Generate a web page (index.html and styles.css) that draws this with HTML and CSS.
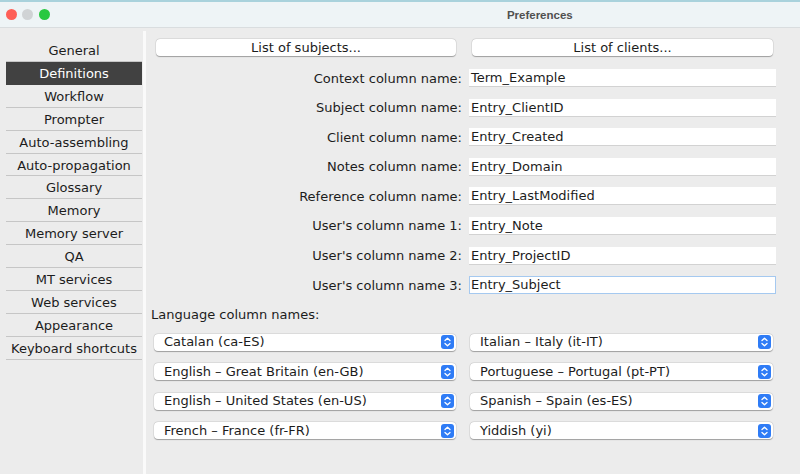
FILE: index.html
```html
<!DOCTYPE html>
<html>
<head>
<meta charset="utf-8">
<link rel="stylesheet" href="styles.css">
</head>
<body>
<div class="window">
  <div class="titlebar">
    <div class="lights">
      <span class="light red"></span>
      <span class="light gray"></span>
      <span class="light green"></span>
    </div>
    <div class="title">Preferences</div>
  </div>
  <div class="main">
    <div class="sidebar">
      <div class="item">General</div>
      <div class="item selected">Definitions</div>
      <div class="item">Workflow</div>
      <div class="item">Prompter</div>
      <div class="item">Auto-assembling</div>
      <div class="item">Auto-propagation</div>
      <div class="item">Glossary</div>
      <div class="item">Memory</div>
      <div class="item">Memory server</div>
      <div class="item">QA</div>
      <div class="item">MT services</div>
      <div class="item">Web services</div>
      <div class="item">Appearance</div>
      <div class="item">Keyboard shortcuts</div>
    </div>
    <div class="divider"></div>
    <div class="content">
      <div class="buttons">
        <div class="btn btn-left">List of subjects...</div>
        <div class="btn btn-right">List of clients...</div>
      </div>
      <div class="form">
        <div class="label">Context column name:</div><div class="field">Term_Example</div>
        <div class="label">Subject column name:</div><div class="field">Entry_ClientID</div>
        <div class="label">Client column name:</div><div class="field">Entry_Created</div>
        <div class="label">Notes column name:</div><div class="field">Entry_Domain</div>
        <div class="label">Reference column name:</div><div class="field">Entry_LastModified</div>
        <div class="label">User's column name 1:</div><div class="field">Entry_Note</div>
        <div class="label">User's column name 2:</div><div class="field">Entry_ProjectID</div>
        <div class="label">User's column name 3:</div><div class="field focused">Entry_Subject</div>
      </div>
      <div class="lang-label">Language column names:</div>
      <div class="selects">
        <div class="select"><span class="sel-text">Catalan (ca-ES)</span><svg class="stepper" viewBox="0 0 13 14"><rect x="0" y="0" width="13" height="14" rx="3" fill="#2f7cf6"/><path d="M4 5.5 L6.5 3.2 L9 5.5 M4 8.5 L6.5 10.8 L9 8.5" fill="none" stroke="#fff" stroke-width="1.3" stroke-linecap="round" stroke-linejoin="round"/></svg></div>
        <div class="select"><span class="sel-text">Italian – Italy (it-IT)</span><svg class="stepper" viewBox="0 0 13 14"><rect x="0" y="0" width="13" height="14" rx="3" fill="#2f7cf6"/><path d="M4 5.5 L6.5 3.2 L9 5.5 M4 8.5 L6.5 10.8 L9 8.5" fill="none" stroke="#fff" stroke-width="1.3" stroke-linecap="round" stroke-linejoin="round"/></svg></div>
        <div class="select"><span class="sel-text">English – Great Britain (en-GB)</span><svg class="stepper" viewBox="0 0 13 14"><rect x="0" y="0" width="13" height="14" rx="3" fill="#2f7cf6"/><path d="M4 5.5 L6.5 3.2 L9 5.5 M4 8.5 L6.5 10.8 L9 8.5" fill="none" stroke="#fff" stroke-width="1.3" stroke-linecap="round" stroke-linejoin="round"/></svg></div>
        <div class="select"><span class="sel-text">Portuguese – Portugal (pt-PT)</span><svg class="stepper" viewBox="0 0 13 14"><rect x="0" y="0" width="13" height="14" rx="3" fill="#2f7cf6"/><path d="M4 5.5 L6.5 3.2 L9 5.5 M4 8.5 L6.5 10.8 L9 8.5" fill="none" stroke="#fff" stroke-width="1.3" stroke-linecap="round" stroke-linejoin="round"/></svg></div>
        <div class="select"><span class="sel-text">English – United States (en-US)</span><svg class="stepper" viewBox="0 0 13 14"><rect x="0" y="0" width="13" height="14" rx="3" fill="#2f7cf6"/><path d="M4 5.5 L6.5 3.2 L9 5.5 M4 8.5 L6.5 10.8 L9 8.5" fill="none" stroke="#fff" stroke-width="1.3" stroke-linecap="round" stroke-linejoin="round"/></svg></div>
        <div class="select"><span class="sel-text">Spanish – Spain (es-ES)</span><svg class="stepper" viewBox="0 0 13 14"><rect x="0" y="0" width="13" height="14" rx="3" fill="#2f7cf6"/><path d="M4 5.5 L6.5 3.2 L9 5.5 M4 8.5 L6.5 10.8 L9 8.5" fill="none" stroke="#fff" stroke-width="1.3" stroke-linecap="round" stroke-linejoin="round"/></svg></div>
        <div class="select"><span class="sel-text">French – France (fr-FR)</span><svg class="stepper" viewBox="0 0 13 14"><rect x="0" y="0" width="13" height="14" rx="3" fill="#2f7cf6"/><path d="M4 5.5 L6.5 3.2 L9 5.5 M4 8.5 L6.5 10.8 L9 8.5" fill="none" stroke="#fff" stroke-width="1.3" stroke-linecap="round" stroke-linejoin="round"/></svg></div>
        <div class="select"><span class="sel-text">Yiddish (yi)</span><svg class="stepper" viewBox="0 0 13 14"><rect x="0" y="0" width="13" height="14" rx="3" fill="#2f7cf6"/><path d="M4 5.5 L6.5 3.2 L9 5.5 M4 8.5 L6.5 10.8 L9 8.5" fill="none" stroke="#fff" stroke-width="1.3" stroke-linecap="round" stroke-linejoin="round"/></svg></div>
      </div>
    </div>
  </div>
</div>
</body>
</html>
```

FILE: styles.css
```css
html, body {
  margin: 0;
  padding: 0;
}
body {
  width: 800px;
  height: 474px;
  overflow: hidden;
  background: #ececec;
  font-family: "DejaVu Sans", "Noto Sans", sans-serif;
  font-size: 13px;
  color: #1c1c1c;
}
.window {
  display: flex;
  flex-direction: column;
  height: 474px;
}
.titlebar {
  box-sizing: border-box;
  height: 28px;
  border-top: 2px solid #a9d2dc;
  border-bottom: 1px solid #d9dddf;
  background: #eef4f6;
  display: flex;
  align-items: center;
}
.lights {
  display: flex;
  gap: 5.7px;
  margin-left: 5.5px;
}
.light {
  width: 11px;
  height: 11px;
  border-radius: 50%;
  display: block;
}
.red { background: #fe5f57; }
.gray { background: #d0d3d5; }
.green { background: #28c840; }
.title {
  margin-left: 457px;
  font-family: "Liberation Sans", Arial, sans-serif;
  font-weight: bold;
  font-size: 11.5px;
  color: #505050;
}
.main {
  flex: 1;
  display: flex;
}
.sidebar {
  width: 136px;
  padding: 11px 0 0 6px;
  background: #ececec;
}
.item {
  box-sizing: border-box;
  height: 22.92px;
  line-height: 24px;
  text-align: center;
  border-bottom: 1px solid #c6c6c6;
  white-space: nowrap;
  overflow: hidden;
}
.item.selected {
  background: #414141;
  color: #ffffff;
  border-bottom-color: #414141;
}
.divider {
  width: 3px;
  margin-left: 1px;
  margin-top: 3px;
  background: #fafafa;
}
.content {
  flex: 1;
  padding-top: 11px;
}
.buttons {
  display: flex;
  gap: 16px;
  margin-left: 10px;
}
.btn {
  box-sizing: border-box;
  height: 17px;
  line-height: 18px;
  background: #ffffff;
  border-radius: 4px;
  text-align: center;
  box-shadow: 0 0.5px 1px rgba(0,0,0,0.3), 0 0 0 0.5px rgba(0,0,0,0.08);
}
.btn-left { width: 300px; }
.btn-right { width: 301px; }
.form {
  margin-top: 13px;
  display: grid;
  grid-template-columns: 316px 307px;
  column-gap: 7px;
  grid-auto-rows: 18px;
  row-gap: 11.6px;
  align-items: center;
}
.label {
  text-align: right;
  white-space: nowrap;
}
.field {
  box-sizing: border-box;
  height: 18px;
  line-height: 18px;
  padding-left: 2px;
  background: #ffffff;
  border-bottom: 1px solid #d2d2d2;
  white-space: nowrap;
}
.field.focused {
  border: 1.5px solid #a5c9f0;
  line-height: 15px;
  padding-left: 1px;
}
.lang-label {
  margin-top: 13px;
  padding-left: 5px;
  line-height: 16px;
}
.selects {
  margin-top: 10.5px;
  margin-left: 8px;
  display: grid;
  grid-template-columns: 302px 303px;
  column-gap: 14px;
  grid-auto-rows: 17px;
  row-gap: 12.5px;
}
.select {
  box-sizing: border-box;
  height: 17px;
  background: #ffffff;
  border-radius: 4px;
  box-shadow: 0 0.5px 1px rgba(0,0,0,0.3), 0 0 0 0.5px rgba(0,0,0,0.08);
  display: flex;
  align-items: center;
  padding-left: 10px;
  padding-right: 2px;
}
.sel-text {
  flex: 1;
  white-space: nowrap;
  line-height: 18px;
}
.stepper {
  width: 13px;
  height: 14px;
  display: block;
}
```
